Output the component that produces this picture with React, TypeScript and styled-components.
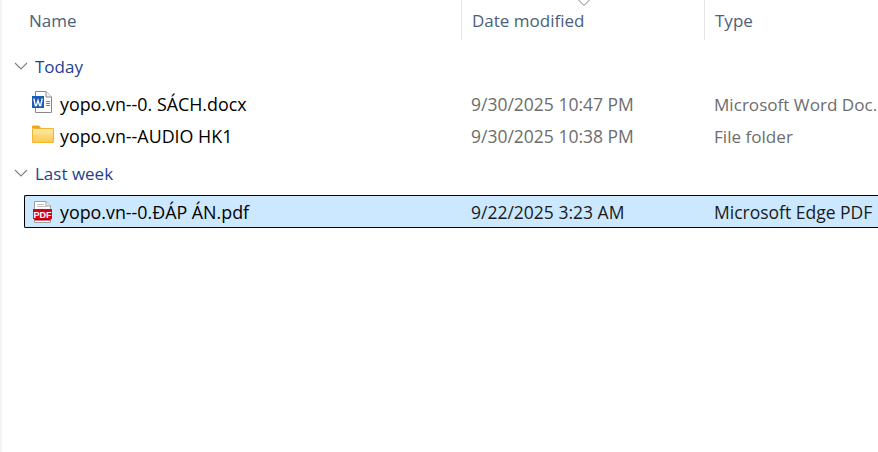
import React from "react";
import styled, { createGlobalStyle } from "styled-components";

const GlobalStyle = createGlobalStyle`
  html, body {
    margin: 0;
    padding: 0;
    background: #fff;
    overflow: hidden;
  }
`;

const NAME_WIDTH = 461;
const DATE_WIDTH = 243;

const Window = styled.div`
  width: 878px;
  height: 452px;
  box-sizing: border-box;
  border-left: 2px solid #f3f3f3;
  font-family: "Open Sans", "Noto Sans", "Liberation Sans", sans-serif;
  font-size: 17px;
  overflow: hidden;
  background: #fff;
`;

const HeaderRow = styled.div`
  display: grid;
  grid-template-columns: ${NAME_WIDTH - 2}px ${DATE_WIDTH}px 1fr;
  height: 40px;
`;

const HeaderCell = styled.div<{ $divider?: boolean }>`
  position: relative;
  display: flex;
  align-items: center;
  box-sizing: border-box;
  padding-left: ${(p) => (p.$divider ? 10 : 27)}px;
  color: #4c607a;
  white-space: nowrap;
  border-left: ${(p) => (p.$divider ? "1px solid #e5e5e5" : "none")};
`;

const SortArrow = styled.svg`
  position: absolute;
  left: 115px;
  top: 0;
`;

const GroupRow = styled.div<{ $top: number }>`
  display: flex;
  align-items: center;
  height: 26px;
  margin-top: ${(p) => p.$top}px;
  padding-left: 12px;
  gap: 7px;
  color: #1f3f8f;
`;

const FileRow = styled.div<{ $selected?: boolean; $top?: number }>`
  display: grid;
  grid-template-columns: 35px 411px ${DATE_WIDTH}px 1fr;
  align-items: center;
  box-sizing: border-box;
  height: ${(p) => (p.$selected ? 33 : 32)}px;
  margin-left: 22px;
  margin-top: ${(p) => p.$top ?? 0}px;
  white-space: nowrap;
  background: ${(p) => (p.$selected ? "#cce8ff" : "transparent")};
  border: ${(p) => (p.$selected ? "1px solid #000" : "1px solid transparent")};
  border-right: none;
  border-radius: ${(p) => (p.$selected ? "2px 0 0 2px" : "0")};
`;

const IconSlot = styled.div<{ $lift?: number }>`
  display: flex;
  align-items: center;
  justify-content: center;
  margin-bottom: ${(p) => (p.$lift ?? 0) * 2}px;
`;

const FileName = styled.div`
  color: #000;
  font-size: 17.85px;
`;

const Detail = styled.div<{ $dark?: boolean }>`
  color: ${(p) => (p.$dark ? "#1a1a1a" : "#6d6d6d")};
  font-size: 17.5px;
  overflow: hidden;
`;

const TypeText = styled(Detail)`
  font-size: ${(p) => (p.$dark ? 17.5 : 17.1)}px;
`;

const Chevron = () => (
  <svg width="14" height="8" viewBox="0 0 14 8" fill="none">
    <path d="M1 1l6 6 6-6" stroke="#7f7f7f" strokeWidth="1.1" />
  </svg>
);

const WordIcon = () => (
  <svg width="21" height="22" viewBox="0 0 21 22">
    <path d="M3.500 .5h10.500l5.500 5.500V21.500H3.500z" fill="#fff" stroke="#8a8a8a" />
    <path d="M14 .5v5.500h5.500" fill="#f3f3f3" stroke="#8a8a8a" />
    <path d="M14 10.500h4M14 12.500h4M14 14.500h4" stroke="#4a89d0" />
    <rect x="0" y="5" width="12" height="12" fill="#1f5bb5" />
    <path d="M1.800 7.500l1.500 7h1.100L6 9.500l1.600 5h1.100l1.500-7" fill="none" stroke="#fff" strokeWidth="1.300" />
  </svg>
);

const FolderIcon = () => (
  <svg width="22" height="18" viewBox="0 0 22 18">
    <defs>
      <linearGradient id="folderFill" x1="0" y1="0" x2="0" y2="1">
        <stop offset="0" stopColor="#ffe9a6" />
        <stop offset="1" stopColor="#fcc94f" />
      </linearGradient>
    </defs>
    <path d="M0 1.500a1 1 0 0 1 1-1h6l2 2.500h-9z" fill="#f2a90f" />
    <rect x="0" y="3" width="22" height="15" rx="1" fill="#f3b52e" />
    <rect x="1" y="4" width="20" height="13" fill="url(#folderFill)" />
  </svg>
);

const PdfIcon = () => (
  <svg width="20" height="22" viewBox="0 0 20 22">
    <path d="M1.500 .5h11.500l4.500 4.500V21.500h-16z" fill="#fff" stroke="#a0a0a0" />
    <path d="M13 .5V5h4.500" fill="#eee" stroke="#a0a0a0" />
    <path d="M4 3.500h7M4 5.500h10" stroke="#c4c4c4" />
    <rect x="0" y="8" width="19" height="10" fill="#d9001b" />
    <rect x="1.500" y="18" width="16" height="1.500" fill="#9c0012" />
    <text x="9.500" y="16.500" textAnchor="middle" fontSize="9" fontWeight="700" fontFamily="Liberation Sans, sans-serif" fill="#fff">PDF</text>
  </svg>
);

export default function App() {
  return (
    <Window>
      <GlobalStyle />
      <HeaderRow>
        <HeaderCell>Name</HeaderCell>
        <HeaderCell $divider>
          <SortArrow width="14" height="7" viewBox="0 0 14 7" fill="none">
            <path d="M1.500 0l5.500 5.500L12.500 0" stroke="#7f7f7f" />
          </SortArrow>
          Date modified
        </HeaderCell>
        <HeaderCell $divider>Type</HeaderCell>
      </HeaderRow>

      <GroupRow $top={13}>
        <Chevron />
        Today
      </GroupRow>
      <FileRow $top={9}>
        <IconSlot $lift={2}><WordIcon /></IconSlot>
        <FileName>yopo.vn--0. SÁCH.docx</FileName>
        <Detail>9/30/2025 10:47 PM</Detail>
        <TypeText>Microsoft Word Doc.</TypeText>
      </FileRow>
      <FileRow>
        <IconSlot $lift={2}><FolderIcon /></IconSlot>
        <FileName>yopo.vn--AUDIO HK1</FileName>
        <Detail>9/30/2025 10:38 PM</Detail>
        <TypeText>File folder</TypeText>
      </FileRow>

      <GroupRow $top={8}>
        <Chevron />
        Last week
      </GroupRow>
      <FileRow $selected $top={9}>
        <IconSlot><PdfIcon /></IconSlot>
        <FileName>yopo.vn--0.ĐÁP ÁN.pdf</FileName>
        <Detail $dark>9/22/2025 3:23 AM</Detail>
        <TypeText $dark>Microsoft Edge PDF</TypeText>
      </FileRow>
    </Window>
  );
}
